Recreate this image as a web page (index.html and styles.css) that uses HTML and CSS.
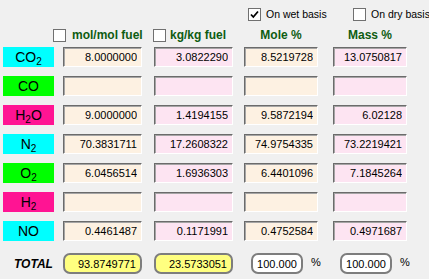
FILE: index.html
```html
<!DOCTYPE html>
<html lang="en">
 <head>
  <meta charset="UTF-8" />
  <title>Flue gas composition</title>
  <link rel="stylesheet" href="styles.css">
 </head>
 <body>
  <div class="panel">
   <!-- basis selection -->
   <div class="basis-row">
    <label class="check"><span class="box"><svg width="11" height="11" viewBox="0 0 11 11"><path d="M2 5.5 L4.3 8 L9 2.5" fill="none" stroke="#000" stroke-width="1.8"/></svg></span>On wet basis</label>
    <label class="check"><span class="box"></span>On dry basis</label>
   </div>
   <!-- column headings -->
   <div class="grid head">
    <div></div>
    <div class="col-title"><span class="box"></span>mol/mol fuel</div>
    <div class="col-title kg"><span class="box"></span>kg/kg fuel</div>
    <div class="col-title center">Mole %</div>
    <div class="col-title center">Mass %</div>
   </div>
   <div class="grid rows">
    <div class="species cyan">CO<sub>2</sub></div>
    <input class="cell cream" value="8.0000000" readonly>
    <input class="cell pink" value="3.0822290" readonly>
    <input class="cell cream short" value="8.5219728" readonly>
    <input class="cell pink short" value="13.0750817" readonly>

    <div class="species green">CO</div>
    <input class="cell cream" value="" readonly>
    <input class="cell pink" value="" readonly>
    <input class="cell cream short" value="" readonly>
    <input class="cell pink short" value="" readonly>

    <div class="species magenta">H<sub>2</sub>O</div>
    <input class="cell cream" value="9.0000000" readonly>
    <input class="cell pink" value="1.4194155" readonly>
    <input class="cell cream short" value="9.5872194" readonly>
    <input class="cell pink short" value="6.02128" readonly>

    <div class="species cyan">N<sub>2</sub></div>
    <input class="cell cream" value="70.3831711" readonly>
    <input class="cell pink" value="17.2608322" readonly>
    <input class="cell cream short" value="74.9754335" readonly>
    <input class="cell pink short" value="73.2219421" readonly>

    <div class="species green">O<sub>2</sub></div>
    <input class="cell cream" value="6.0456514" readonly>
    <input class="cell pink" value="1.6936303" readonly>
    <input class="cell cream short" value="6.4401096" readonly>
    <input class="cell pink short" value="7.1845264" readonly>

    <div class="species magenta">H<sub>2</sub></div>
    <input class="cell cream" value="" readonly>
    <input class="cell pink" value="" readonly>
    <input class="cell cream short" value="" readonly>
    <input class="cell pink short" value="" readonly>

    <div class="species cyan">NO</div>
    <input class="cell cream" value="0.4461487" readonly>
    <input class="cell pink" value="0.1171991" readonly>
    <input class="cell cream short" value="0.4752584" readonly>
    <input class="cell pink short" value="0.4971687" readonly>
   </div>
   <!-- totals -->
   <div class="grid total">
    <div class="total-label">TOTAL</div>
    <input class="pill yellow" value="93.8749771" readonly>
    <input class="pill yellow" value="23.5733051" readonly>
    <div class="pct"><input class="pill small" value="100.000" readonly><span>%</span></div>
    <div class="pct"><input class="pill small" value="100.000" readonly><span>%</span></div>
   </div>
  </div>
 </body>
</html>
```
FILE: styles.css
```css
body {
 margin: 0;
 background-color: #f0f0f0;
 font-family: "Liberation Sans", Arial, sans-serif;
 font-size: 11px;
 color: #000;
}
.panel {
 width: 429px;
 height: 279px;
 padding: 8px 0 0 3px;
 box-sizing: border-box;
}
.basis-row {
 display: grid;
 grid-template-columns: 105px auto;
 height: 13px;
 padding-left: 245px;
}
.check {
 display: flex;
 align-items: center;
 gap: 5px;
 font-size: 10.5px;
 line-height: 13px;
 white-space: nowrap;
}
.box {
 display: inline-flex;
 flex-shrink: 0;
 align-items: center;
 justify-content: center;
 width: 13px;
 height: 13px;
 box-sizing: border-box;
 border: 1px solid #707070;
 background-color: #fff;
}
.grid {
 display: grid;
 grid-template-columns: 60px 91px 90px 89px 74px;
}
.head {
 margin-top: 8px;
 height: 13px;
 align-items: center;
}
.col-title {
 display: flex;
 align-items: center;
 gap: 6px;
 margin-left: -10px;
 font-size: 12px;
 font-weight: bold;
 color: #0e5c12;
 line-height: 13px;
 white-space: nowrap;
}
.col-title.kg {
 margin-left: -1px;
 gap: 4px;
}
.col-title.center {
 width: 74px;
 justify-content: center;
 margin-left: 0;
}
.rows {
 margin-top: 5px;
 row-gap: 9px;
}
.species {
 width: 51px;
 height: 20px;
 text-align: center;
 font-size: 14px;
 line-height: 20px;
}
.species sub {
 font-size: 10px;
 vertical-align: -3px;
 line-height: 0;
}
.cyan {
 background-color: #00ffff;
}
.green {
 background-color: #00ff00;
}
.magenta {
 background-color: #ff1493;
}
.cell {
 width: 79px;
 height: 20px;
 box-sizing: border-box;
 margin: 0;
 padding: 0 4px 0 0;
 border: 1px solid;
 border-color: #6b6b6b #ffffff #ffffff #6b6b6b;
 box-shadow: inset 1px 1px 0 #a5a5a5;
 font-family: "Liberation Sans", Arial, sans-serif;
 font-size: 11px;
 text-align: right;
 color: #000;
 outline: none;
}
.cell.short {
 width: 74px;
}
.cream {
 background-color: #fdf1e2;
}
.pink {
 background-color: #fde4f2;
}
.total {
 margin-top: 12px;
 height: 21px;
 align-items: center;
}
.total-label {
 padding-left: 11px;
 font-size: 12px;
 font-weight: bold;
 font-style: italic;
}
.pill {
 width: 79px;
 height: 21px;
 box-sizing: border-box;
 margin: 0;
 padding: 0 4px 0 0;
 border: 2px solid #7d7d7d;
 border-radius: 7px;
 font-family: "Liberation Sans", Arial, sans-serif;
 font-size: 11px;
 text-align: right;
 color: #000;
 outline: none;
}
.yellow {
 background-color: #ffff80;
}
.pct {
 display: flex;
 align-items: center;
 gap: 8px;
 padding-left: 7px;
}
.pct span {
 margin-top: -4px;
}
.pill.small {
 width: 52px;
 padding: 0;
 text-align: center;
 background-color: #fff;
}
```
